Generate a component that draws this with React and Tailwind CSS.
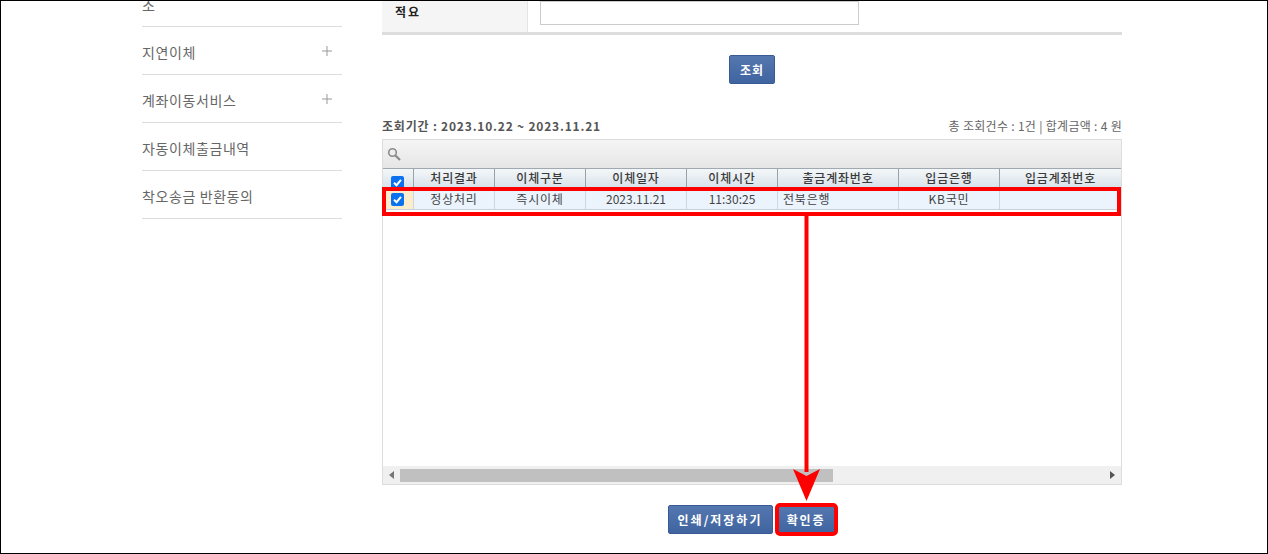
const font = '"Noto Sans CJK KR", "Liberation Sans", sans-serif';
const cols = [
  ['w-[81px]', '처리결과', '정상처리', 'text-center tracking-[0.8px]'],
  ['w-[91px]', '이체구분', '즉시이체', 'text-center tracking-[0.8px]'],
  ['w-[101px]', '이체일자', '2023.11.21', 'text-center'],
  ['w-[91px]', '이체시간', '11:30:25', 'text-center'],
  ['w-[121px]', '출금계좌번호', '전북은행', 'text-left pl-[5px] tracking-[0.8px]'],
  ['w-[101px]', '입금은행', 'KB국민', 'text-center tracking-[0.8px]'],
  ['w-[121px]', '입금계좌번호', '', 'text-center'],
];

function Check() {
  return (
    <span className="w-[13px] h-[13px] rounded-[2px] bg-[#0a72ee] flex items-center justify-center">
      <svg width="11" height="11" viewBox="0 0 11 11" fill="none">
        <path d="M2 5.8 L4.5 8.2 L9 2.8" stroke="#fff" strokeWidth="2" />
      </svg>
    </span>
  );
}

function Btn({ children, className = '' }) {
  return (
    <button className={`h-[29px] rounded-[2px] border border-[#3a5a96] bg-gradient-to-b from-[#5577b0] to-[#3f649f] text-white text-[12px] font-bold ${className}`}>
      {children}
    </button>
  );
}

function Side({ label, plus, className = 'h-[48px]', align = 'items-center' }) {
  return (
    <div className={`flex justify-between border-b border-[#dddddd] text-[14px] text-[#666666] tracking-[0.6px] ${className} ${align}`}>
      <span className="leading-[20px] mt-[2px]">{label}</span>
      {plus && (
        <svg className="mr-[10px]" width="10" height="10" viewBox="0 0 10 10">
          <path d="M5 0V10M0 5H10" stroke="#999999" strokeWidth="1" />
        </svg>
      )}
    </div>
  );
}

export default function App() {
  return (
    <div className="relative w-[1268px] h-[554px] overflow-hidden bg-white border border-black box-border" style={{ fontFamily: font }}>
      <div className="flex h-full pl-[141px]">
        <aside className="w-[200px] shrink-0">
          <div className="h-[26px] overflow-hidden flex items-end border-b border-[#dddddd] text-[14px] text-[#666666]">
            <span className="leading-[20px] mb-[11px]">소</span>
          </div>
          <Side label="지연이체" plus />
          <Side label="계좌이동서비스" plus />
          <Side label="자동이체출금내역" />
          <Side label="착오송금 반환동의" />
        </aside>

        <main className="ml-[40px] w-[740px] shrink-0 flex flex-col">
          <div className="h-[34px] shrink-0 flex border-b-[3px] border-[#dddddd]">
            <div className="w-[146px] bg-[#f5f5f5] border-r border-[#e5e5e5] pl-[13px] pt-[2px] text-[12px] font-bold text-[#222222] tracking-[2px]">적요</div>
            <div className="pl-[12px]">
              <div className="w-[319px] h-[24px] border border-[#cccccc] bg-white" />
            </div>
          </div>

          <div className="flex justify-center mt-[20px] h-[29px] shrink-0">
            <Btn className="w-[46px] tracking-[1px]">조회</Btn>
          </div>

          <div className="mt-[33px] h-[22px] shrink-0 flex justify-between items-start">
            <span className="text-[12px] font-bold text-[#555555] leading-[18px] tracking-[0.8px]">조회기간 : 2023.10.22 ~ 2023.11.21</span>
            <span className="text-[12px] text-[#666666] leading-[18px] tracking-[0.3px]">총 조회건수 : 1건 | 합계금액 : 4 원</span>
          </div>

          <div className="h-[346px] shrink-0 border border-[#dddddd] flex flex-col">
            <div className="h-[28px] shrink-0 flex items-center pl-[4px] bg-gradient-to-b from-[#f5f5f5] to-[#e6e6e6]">
              <svg width="14" height="14" viewBox="0 0 14 14" fill="none">
                <circle cx="5.5" cy="5.5" r="3.8" stroke="#8a8a8a" strokeWidth="1.6" />
                <path d="M8.5 8.5L13 13" stroke="#8a8a8a" strokeWidth="2.2" />
              </svg>
            </div>
            <div className="h-[22px] shrink-0 flex border-t border-b border-[#a0a8b0] bg-gradient-to-b from-[#f4f7f9] to-[#d6e1e9] text-[12px] text-[#3a3a3a] font-medium">
              <div className="w-[31px] shrink-0 flex items-end justify-center border-r border-[#9aa2aa] pr-[2px]"><Check /></div>
              {cols.map((c) => (
                <div key={c[1]} className={`${c[0]} shrink-0 text-center leading-[18px] tracking-[0.8px] border-r border-[#9aa2aa] last:border-r-0`}>{c[1]}</div>
              ))}
            </div>
            <div className="h-[20px] shrink-0 flex border-b border-[#c8d0dc] bg-[#ebf3fc] text-[12px] text-[#444444]">
              <div className="w-[31px] shrink-0 flex items-center justify-center border-r border-[#d0d6e0] bg-[#fdeccb] pr-[2px]"><Check /></div>
              {cols.map((c) => (
                <div key={c[1]} className={`${c[0]} shrink-0 ${c[3]} leading-[18px] border-r border-[#d0d6e0] last:border-r-0`}>{c[2]}</div>
              ))}
            </div>
            <div className="flex-1" />
            <div className="h-[18px] shrink-0 bg-[#f0f0f0] flex items-center">
              <span className="w-[17px] flex justify-center">
                <svg width="5" height="8" viewBox="0 0 5 8"><path d="M5 0V8L0 4Z" fill="#777777" /></svg>
              </span>
              <div className="w-[433px] h-[13px] bg-[#c0c0c0]" />
              <div className="flex-1" />
              <span className="w-[17px] flex justify-center">
                <svg width="5" height="8" viewBox="0 0 5 8"><path d="M0 0V8L5 4Z" fill="#555555" /></svg>
              </span>
            </div>
          </div>

          <div className="mt-[20px] flex justify-center gap-[5px] pr-[2px]">
            <Btn className="w-[105px] tracking-[2px]">인쇄/저장하기</Btn>
            <Btn className="w-[57px] tracking-[1.8px]">확인증</Btn>
          </div>
        </main>
      </div>

      {/* Red annotation overlays */}
      <div className="absolute left-[381px] top-[186px] w-[739px] h-[29px] border-[4px] border-[#ff0000]" />
      <div className="absolute left-[774px] top-[502px] w-[63px] h-[33px] border-[4px] border-[#ff0000] rounded-[5px]" />
      <svg className="absolute left-[791px] top-[213px]" width="30" height="288" viewBox="0 0 30 288" fill="none">
        <path d="M12.5 0H16.5V258H12.5Z" fill="#ff0000" />
        <path d="M1 255 L14.5 262 L28 255 L14.5 287Z" fill="#ff0000" />
      </svg>
    </div>
  );
}
